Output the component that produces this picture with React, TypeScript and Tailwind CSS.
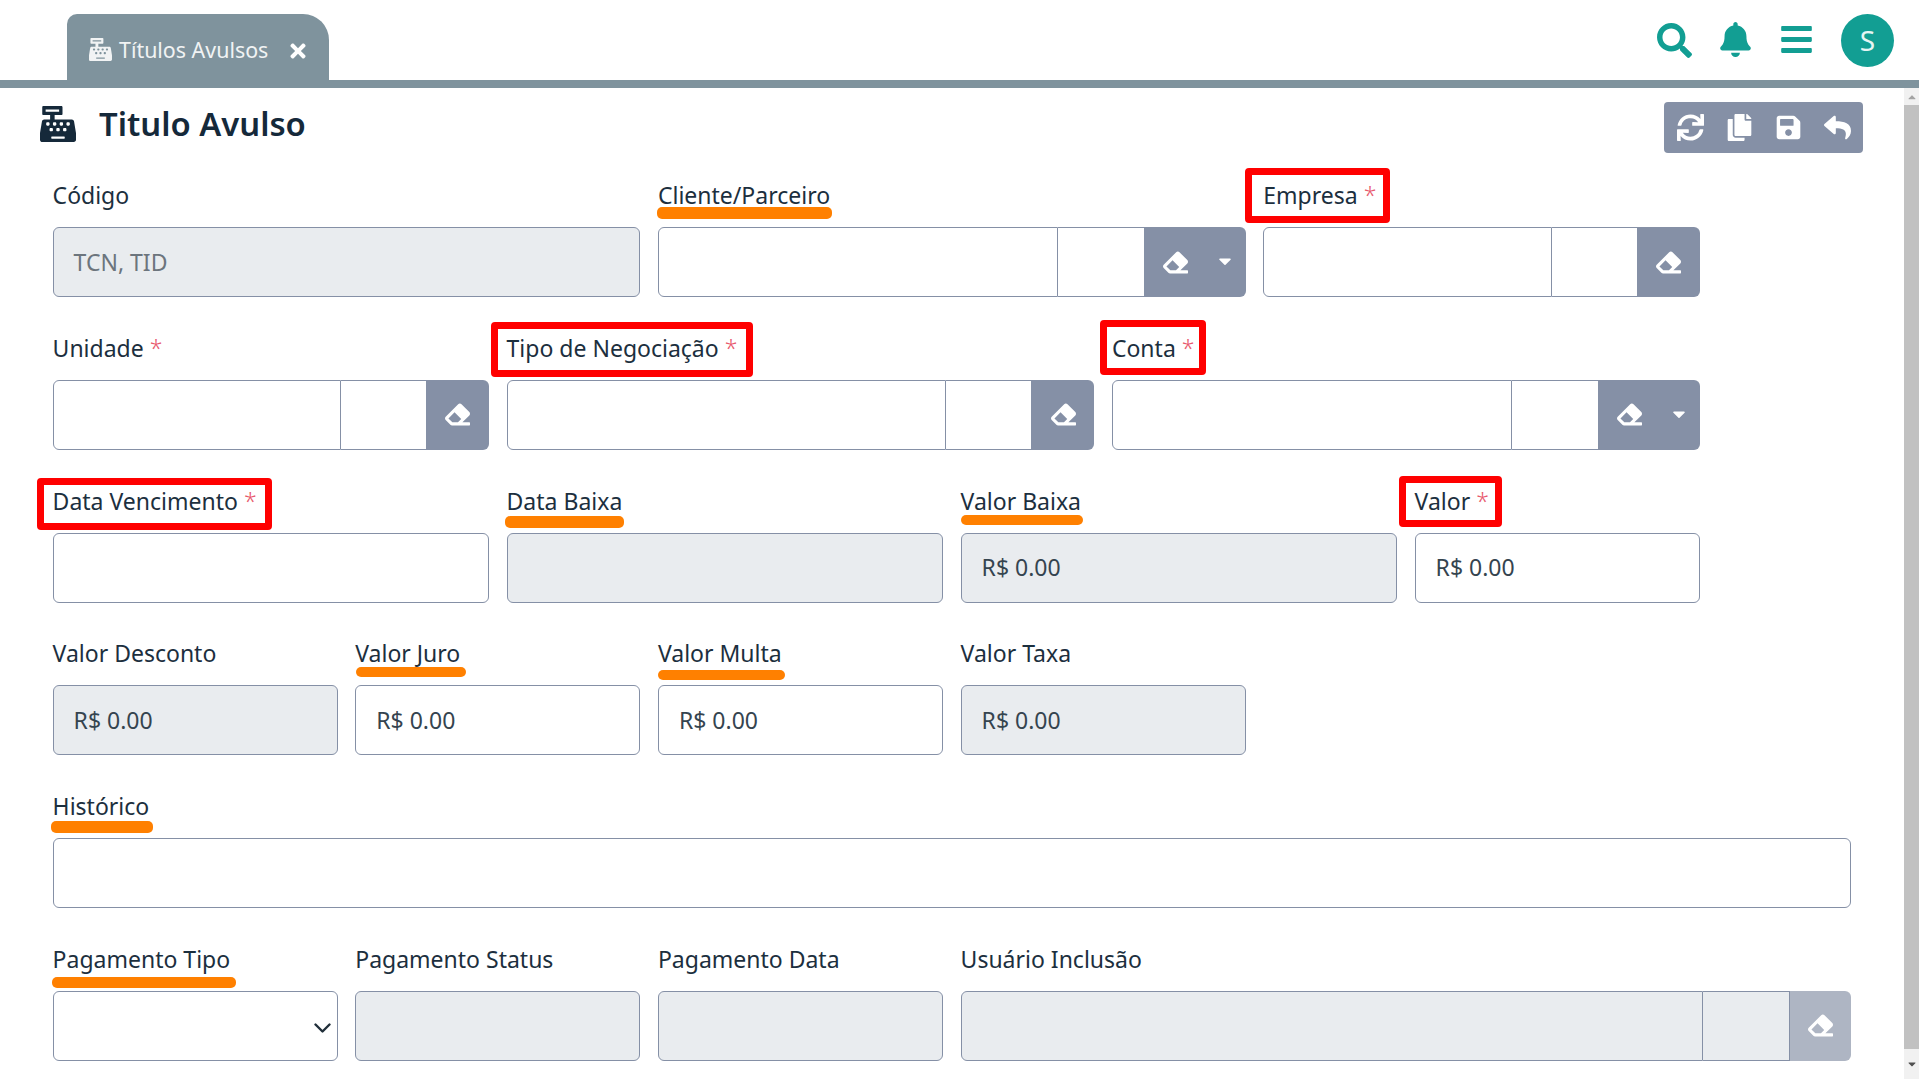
import React from "react";
import { FaCashRegister, FaTimes, FaSearch, FaBell, FaBars, FaSync, FaCopy, FaSave, FaReply, FaEraser, FaCaretDown, FaCaretUp } from "react-icons/fa";

const FONT = "font-['Noto_Sans','Open_Sans',sans-serif]";

type Mark = { kind: "red" | "orange"; cls: string };

function Field({ label, req, span, mark, children }: { label: string; req?: boolean; span: string; mark?: Mark; children: React.ReactNode }) {
  return (
    <div className={`${span} relative flex flex-col`}>
      <label className="h-[36px] mb-[14px] text-[23px] leading-[36px] text-[#1c2f3e] whitespace-nowrap">
        {label}
        {req && <span className="text-[#e8596d] ml-[6px] font-light">*</span>}
      </label>
      {children}
      {mark && mark.kind === "red" && <div className={`absolute border-[7px] border-[#ff0000] rounded-[4px] pointer-events-none ${mark.cls}`} />}
      {mark && mark.kind === "orange" && <div className={`absolute bg-[#ff8000] rounded-[5px] pointer-events-none ${mark.cls}`} />}
    </div>
  );
}

function TextBox({ value, disabled, muted }: { value?: string; disabled?: boolean; muted?: boolean }) {
  return (
    <div className={`h-[70px] rounded-[6px] border border-[#8590a6] px-[20px] flex items-center text-[23px] ${disabled ? "bg-[#e9ecef]" : "bg-white"} ${muted ? "text-[#6c757d]" : "text-[#35444f]"}`}>
      {value}
    </div>
  );
}

function Lookup({ second, btn, caret, disabled }: { second: string; btn: string; caret?: boolean; disabled?: boolean }) {
  const bg = disabled ? "bg-[#e9ecef]" : "bg-white";
  return (
    <div className="h-[70px] flex">
      <div className={`flex-1 rounded-l-[6px] border border-[#8590a6] ${bg}`} />
      <div className={`${second} border-y border-r border-[#8590a6] ${bg}`} />
      <div className={`${btn} rounded-r-[6px] flex items-center text-white ${disabled ? "bg-[#aeb5c3]" : "bg-[#8590a6]"} ${caret ? "pl-[18px]" : "justify-center"}`}>
        <FaEraser className="text-[25px]" />
        {caret && <FaCaretDown className="text-[20px] ml-[27px] mb-[2px]" />}
      </div>
    </div>
  );
}

function SelectBox() {
  return (
    <div className="relative h-[70px]">
      <select className="appearance-none w-full h-full rounded-[6px] border border-[#8590a6] bg-white" />
      <svg className="absolute right-[7px] top-[32px] pointer-events-none" width="17" height="11" viewBox="0 0 17 11" fill="none">
        <path d="M1.5 1.5 L8.5 8.5 L15.5 1.5" stroke="#212f3a" strokeWidth="2.4" strokeLinecap="round" strokeLinejoin="round" />
      </svg>
    </div>
  );
}

export default function App() {
  return (
    <div className={`h-screen overflow-hidden bg-white flex flex-col ${FONT}`}>
      <header className="h-[88px] shrink-0 border-b-[8px] border-[#7f939d] flex items-end pl-[67px] pr-[25px]">
        <div className="w-[262px] h-[66px] bg-[#7f939d] rounded-tl-[10px] rounded-tr-[26px] flex items-center pl-[22px] pt-[5px] text-[#f1f3f4]">
          <FaCashRegister className="text-[23px] shrink-0" />
          <span className="ml-[7px] text-[21.4px] leading-none whitespace-nowrap">Títulos Avulsos</span>
          <FaTimes className="text-white text-[22px] ml-[19px] mt-[3px] shrink-0" />
        </div>
        <div className="ml-auto h-full flex items-center text-[#129e93]">
          <FaSearch className="text-[35px]" />
          <FaBell className="text-[35px] ml-[26px] mb-[2px]" />
          <FaBars className="text-[35px] ml-[26px] mb-[2px]" />
          <div className="w-[53px] h-[53px] rounded-full bg-[#129e93] text-[#e6f5f3] text-[28px] flex items-center justify-center ml-[27px]">S</div>
        </div>
      </header>

      <div className="flex-1 flex min-h-0">
        <main className="flex-1 min-w-0">
          <div className="h-[89px] flex items-start pl-[40px] pr-[41px]">
            <FaCashRegister className="text-[36px] text-[#15293a] mt-[18px]" />
            <h1 className="ml-[23px] mt-[13px] text-[32.8px] leading-[46px] font-semibold text-[#15293a]">Titulo Avulso</h1>
            <div className="ml-auto mt-[14px] w-[199px] h-[51px] bg-[#8590a6] rounded-[4px] flex items-center justify-center gap-[22px] text-white text-[27px]">
              <FaSync />
              <FaCopy />
              <FaSave />
              <FaReply />
            </div>
          </div>

          <form className="pl-[52.6px] pr-[53px] grid grid-cols-12 gap-x-[17.6px] gap-y-[32.8px]">
            <Field label="Código" span="col-span-4"><TextBox value="TCN, TID" disabled muted /></Field>
            <Field label="Cliente/Parceiro" span="col-span-4" mark={{ kind: "orange", cls: "left-[-1px] top-[30px] w-[175px] h-[12px]" }}>
              <Lookup second="w-[87px]" btn="w-[101px]" caret />
            </Field>
            <Field label="Empresa" req span="col-span-3" mark={{ kind: "red", cls: "left-[-18px] top-[-9px] w-[145px] h-[55px]" }}>
              <Lookup second="w-[86px]" btn="w-[62px]" />
            </Field>

            <Field label="Unidade" req span="col-span-3"><Lookup second="w-[86px]" btn="w-[62px]" /></Field>
            <Field label="Tipo de Negociação" req span="col-span-4" mark={{ kind: "red", cls: "left-[-16px] top-[-8px] w-[262px] h-[55px]" }}>
              <Lookup second="w-[86px]" btn="w-[62px]" />
            </Field>
            <Field label="Conta" req span="col-span-4" mark={{ kind: "red", cls: "left-[-12px] top-[-10px] w-[106px] h-[55px]" }}>
              <Lookup second="w-[87px]" btn="w-[101px]" caret />
            </Field>
            <div className="col-span-1" />

            <Field label="Data Vencimento" req span="col-span-3" mark={{ kind: "red", cls: "left-[-16px] top-[-5px] w-[235px] h-[52px]" }}><TextBox /></Field>
            <Field label="Data Baixa" span="col-span-3" mark={{ kind: "orange", cls: "left-[-2px] top-[33px] w-[119px] h-[12px]" }}><TextBox disabled /></Field>
            <Field label="Valor Baixa" span="col-span-3" mark={{ kind: "orange", cls: "left-[0px] top-[32px] w-[122px] h-[10px]" }}><TextBox value="R$ 0.00" disabled /></Field>
            <Field label="Valor" req span="col-span-2" mark={{ kind: "red", cls: "left-[-16px] top-[-7px] w-[103px] h-[51px]" }}><TextBox value="R$ 0.00" /></Field>
            <div className="col-span-1" />

            <Field label="Valor Desconto" span="col-span-2"><TextBox value="R$ 0.00" disabled /></Field>
            <Field label="Valor Juro" span="col-span-2" mark={{ kind: "orange", cls: "left-[1px] top-[32px] w-[110px] h-[10px]" }}><TextBox value="R$ 0.00" /></Field>
            <Field label="Valor Multa" span="col-span-2" mark={{ kind: "orange", cls: "left-[0px] top-[35px] w-[127px] h-[10px]" }}><TextBox value="R$ 0.00" /></Field>
            <Field label="Valor Taxa" span="col-span-2"><TextBox value="R$ 0.00" disabled /></Field>
            <div className="col-span-4" />

            <Field label="Histórico" span="col-span-12" mark={{ kind: "orange", cls: "left-[-2px] top-[33px] w-[102px] h-[12px]" }}><TextBox /></Field>

            <Field label="Pagamento Tipo" span="col-span-2" mark={{ kind: "orange", cls: "left-[-1px] top-[36px] w-[184px] h-[11px]" }}><SelectBox /></Field>
            <Field label="Pagamento Status" span="col-span-2"><TextBox disabled /></Field>
            <Field label="Pagamento Data" span="col-span-2"><TextBox disabled /></Field>
            <Field label="Usuário Inclusão" span="col-span-6"><Lookup second="w-[87px]" btn="w-[61px]" disabled /></Field>
          </form>
        </main>

        <div className="w-[15px] shrink-0 bg-[#f1f1f1] flex flex-col items-center">
          <div className="h-[17px] flex items-center justify-center"><FaCaretUp className="text-[12px] text-[#a3a3a3]" /></div>
          <div className="w-full flex-1 bg-[#c1c1c1]" />
          <div className="h-[30px] flex items-center justify-center"><FaCaretDown className="text-[12px] text-[#505050]" /></div>
        </div>
      </div>
    </div>
  );
}
